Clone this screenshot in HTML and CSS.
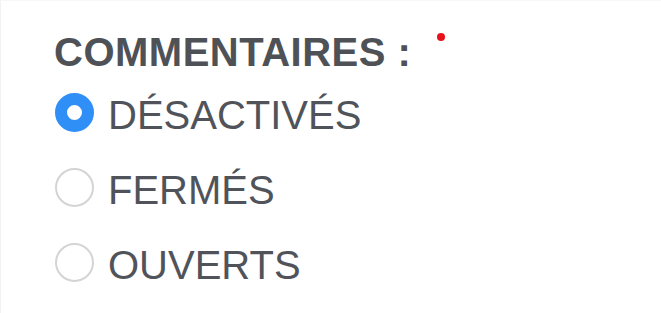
FILE: index.html
```html
<!DOCTYPE html>
<html lang="fr">
<head>
<meta charset="utf-8">
<title>Commentaires</title>
<link rel="stylesheet" href="styles.css">
</head>
<body>
<div class="panel">
  <div class="title">
    <span class="title-text">COMMENTAIRES :</span>
    <span class="required" aria-label="obligatoire"></span>
  </div>
  <label class="option">
    <input class="radio" type="radio" name="comments" checked>
    <span class="option-text">DÉSACTIVÉS</span>
  </label>
  <label class="option">
    <input class="radio" type="radio" name="comments">
    <span class="option-text">FERMÉS</span>
  </label>
  <label class="option">
    <input class="radio" type="radio" name="comments">
    <span class="option-text">OUVERTS</span>
  </label>
</div>
</body>
</html>
```
FILE: styles.css
```css
html, body {
  margin: 0;
  padding: 0;
  background: #ffffff;
}

.panel {
  box-sizing: border-box;
  width: 661px;
  height: 313px;
  padding: 30px 0 0 53px;
  border-left: 1px solid #f2f2f2;
  border-top: 1px solid #f7f7f7;
  display: flex;
  flex-direction: column;
  font-family: "Liberation Sans", Arial, sans-serif;
  color: #50545a;
}

.title {
  display: flex;
  align-items: flex-start;
  height: 46px;
  margin-top: -2px;
}

.title-text {
  font-size: 40px;
  line-height: 46px;
  font-weight: bold;
  letter-spacing: 0.5px;
  color: #4e5257;
}

.required {
  width: 8px;
  height: 8px;
  border-radius: 50%;
  background: #e8101a;
  margin-left: 26px;
  margin-top: 4px;
}

.option {
  display: flex;
  align-items: center;
  height: 75px;
  gap: 14px;
}

.radio {
  appearance: none;
  -webkit-appearance: none;
  box-sizing: border-box;
  width: 39px;
  height: 39px;
  margin: 0 0 0 1px;
  border-radius: 50%;
  border: 2.5px solid #d4d4d4;
  background: #ffffff;
  flex: none;
}

.radio:checked {
  border: 12px solid #2f8ff7;
  background: #ffffff;
}

.option-text {
  font-size: 40px;
  line-height: 46px;
  padding-top: 4px;
  color: #50545a;
}
```
